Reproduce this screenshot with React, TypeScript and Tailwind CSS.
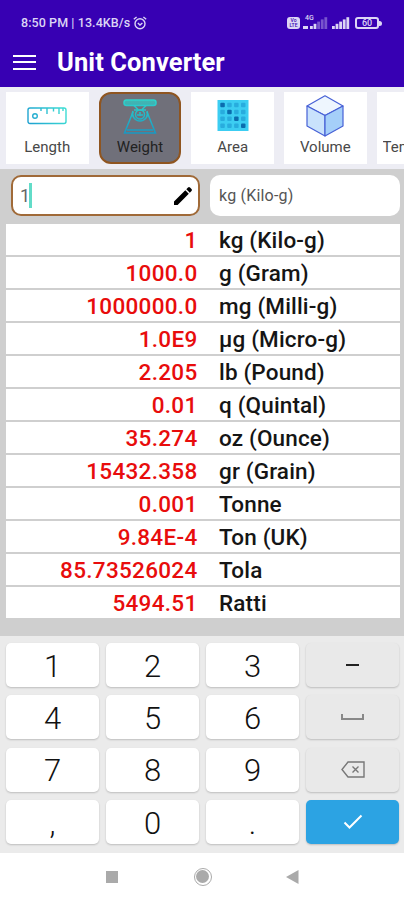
import { useState } from 'react'
import type { ReactNode } from 'react'

const rows = [
  { value: '1', unit: 'kg (Kilo-g)' },
  { value: '1000.0', unit: 'g (Gram)' },
  { value: '1000000.0', unit: 'mg (Milli-g)' },
  { value: '1.0E9', unit: 'µg (Micro-g)' },
  { value: '2.205', unit: 'lb (Pound)' },
  { value: '0.01', unit: 'q (Quintal)' },
  { value: '35.274', unit: 'oz (Ounce)' },
  { value: '15432.358', unit: 'gr (Grain)' },
  { value: '0.001', unit: 'Tonne' },
  { value: '9.84E-4', unit: 'Ton (UK)' },
  { value: '85.73526024', unit: 'Tola' },
  { value: '5494.51', unit: 'Ratti' },
]

const keys = ['1', '2', '3', 'minus', '4', '5', '6', 'space', '7', '8', '9', 'back', ',', '0', '.', 'done']

function LengthIcon() {
  return (
    <svg width="40" height="40" viewBox="0 0 40 40" fill="none" stroke="url(#ruler)" strokeWidth="1.4">
      <defs>
        <linearGradient id="ruler" gradientUnits="userSpaceOnUse" x1="0" y1="28" x2="40" y2="12">
          <stop offset="0" stopColor="#1c9ed0" />
          <stop offset="1" stopColor="#3fe0d4" />
        </linearGradient>
      </defs>
      <rect x="1" y="12" width="38" height="15.5" rx="2" />
      <circle cx="8" cy="20" r="2.3" />
      <path d="M14 12v3M20 12v6M26.5 12v3.5M32 12v6M36 12v3" />
    </svg>
  )
}

function WeightIcon() {
  return (
    <svg width="40" height="40" viewBox="0 0 40 40" fill="none" stroke="url(#scale)" strokeWidth="1.5">
      <defs>
        <linearGradient id="scale" gradientUnits="userSpaceOnUse" x1="0" y1="2" x2="0" y2="38">
          <stop offset="0" stopColor="#2fd8cc" />
          <stop offset="1" stopColor="#1698c4" />
        </linearGradient>
      </defs>
      <rect x="4" y="4" width="32" height="5.500" rx="2.500" fill="url(#scale)" fillOpacity=".7" />
      <path d="M14 9.500l4 4M26 9.500l-4 4M14 14h12M13 16L4.500 37h31L27 16M7 34h26" />
      <path d="M13 15c-2 5 2 10 7 10s9-5 7-10" />
      <circle cx="20" cy="18.500" r="4.500" />
      <path d="M17 19h6M20 16v4" />
    </svg>
  )
}

function AreaIcon() {
  const cells = [0, 1, 2, 3]
  return (
    <svg width="40" height="40" viewBox="0 0 40 40">
      <rect x="4.500" y="4" width="31" height="31" fill="#3ccdf2" />
      {cells.map((r) =>
        cells.map((c) => (
          <rect
            key={`${r}-${c}`}
            x={7.3 + c * 6.9}
            y={6.8 + r * 6.9}
            width="4.500"
            height="4.500"
            rx="1"
            fill={r === c ? '#0b6cae' : '#28acde'}
          />
        )),
      )}
    </svg>
  )
}

function VolumeIcon() {
  return (
    <svg width="42" height="42" viewBox="0 0 42 42" stroke="#4761d6" strokeWidth="1.200" strokeLinejoin="round">
      <path d="M21 .8L39 11L21 20.500L3 11z" fill="#eef6fe" />
      <path d="M3 11L21 20.500V41L3 31z" fill="#c9e2fc" />
      <path d="M39 11L21 20.500V41L39 31z" fill="#a5cff9" />
    </svg>
  )
}

function Tab({ label, icon, active, onClick }: { label: string; icon?: ReactNode; active: boolean; onClick: () => void }) {
  return (
    <button
      onClick={onClick}
      className={`flex h-[72px] w-[82.500px] shrink-0 flex-col items-center whitespace-nowrap text-[15px] leading-[20px] ${
        active ? 'rounded-[12px] border-2 border-[#8f5520] bg-[#70707a] text-[#222]' : 'border-2 border-white bg-white text-[#484848]'
      }`}
    >
      <span className="flex h-[43px] items-center justify-center">{icon}</span>
      <span className="max-w-[71px] truncate">{label}</span>
    </button>
  )
}

function Signal({ dim }: { dim?: boolean }) {
  return (
    <svg width="18" height="12" viewBox="0 0 18 12" fill="#dcd5f5">
      {[0, 1, 2, 3, 4].map((i) => (
        <rect key={i} x={i * 3.6} y={9 - i * 2.2} width="2.800" height={3 + i * 2.2} opacity={dim && i > 1 ? 0.4 : 1} />
      ))}
    </svg>
  )
}

function StatusBar() {
  return (
    <div className="flex h-[46px] items-center pl-[21px] pr-[22px] text-[12.500px] font-medium text-[#dcd5f5]">
      <span className="whitespace-nowrap tracking-[0.08px]">8:50 PM | 13.4KB/s</span>
      <svg className="ml-[2.500px]" width="14" height="14" viewBox="0 0 14 14" fill="none" stroke="currentColor" strokeWidth="1.400">
        <circle cx="7" cy="7.800" r="5" />
        <path d="M.8 3.200L3.600 1M13.200 3.200L10.400 1M4.800 7L7 9l2.400-2" />
      </svg>
      <div className="ml-auto flex items-center">
        <div className="flex h-3 w-[13px] flex-col items-center justify-center rounded-[3px] bg-[#dcd5f5] text-[5px] leading-[5px] text-[#3700b3]">
          <span>Vo</span>
          <span>LTE</span>
        </div>
        <div className="relative ml-[3px] mr-[4px] flex w-[25px] justify-end">
          <Signal dim />
          <span className="absolute -top-[2px] left-[2px] text-[7px] leading-[7px]">4G</span>
          <span className="absolute bottom-0 left-0 h-[3px] w-[5px] bg-[#dcd5f5]" />
        </div>
        <Signal />
        <div className="ml-[5px] flex h-3 w-6 items-center justify-center rounded-[3px] border-2 border-[#dcd5f5] text-[9px] leading-[8px]">60</div>
        <div className="h-[5px] w-[3px] rounded-r-sm bg-[#dcd5f5]" />
      </div>
    </div>
  )
}

function KeyFace({ name }: { name: string }) {
  if (name === 'minus') return <span className="h-[2px] w-[13px] bg-[#222]" />
  if (name === 'space') return <span className="h-[6px] w-[23px] border-2 border-t-0 border-[#888]" />
  if (name === 'back') {
    return (
      <svg width="24" height="18" viewBox="0 0 24 18" fill="none" stroke="#777" strokeWidth="1.400">
        <path d="M7 1h16v15H7L1 8.500zM11.500 5.500l6 6M17.500 5.500l-6 6" />
      </svg>
    )
  }
  if (name === 'done') {
    return (
      <svg width="20" height="16" viewBox="0 0 20 16" fill="none" stroke="#fff" strokeWidth="2">
        <path d="M1.500 8.500l5 5L18.500 1.500" />
      </svg>
    )
  }
  return <span className="relative top-[2px]">{name}</span>
}

function keyColor(name: string) {
  if (name === 'done') return 'bg-[#2ca3e3]'
  if (name === 'minus' || name === 'space' || name === 'back') return 'bg-[#e9e9e9]'
  return 'bg-white'
}

export default function App() {
  const [value, setValue] = useState('1')
  const [tab, setTab] = useState('Weight')

  function press(name: string) {
    if (name === 'back') setValue(value.slice(0, -1))
    else if (name === 'minus') setValue(value + '-')
    else if (name !== 'done' && name !== 'space') setValue(value + name)
  }

  const tabs = [
    { label: 'Length', icon: <LengthIcon /> },
    { label: 'Weight', icon: <WeightIcon /> },
    { label: 'Area', icon: <AreaIcon /> },
    { label: 'Volume', icon: <VolumeIcon /> },
    { label: 'Temperature' },
  ]

  return (
    <div className="flex h-[900px] w-[404px] flex-col overflow-hidden bg-white font-[Roboto,sans-serif]">
      <header className="h-[87px] shrink-0 bg-[#3700b3]">
        <StatusBar />
        <div className="flex h-[32px] items-center pl-[13px] text-white">
          <div className="flex w-[23px] flex-col gap-[4.500px]">
            <span className="h-[2px] bg-white" />
            <span className="h-[2px] bg-white" />
            <span className="h-[2px] bg-white" />
          </div>
          <h1 className="ml-[21px] text-[25.500px] font-bold tracking-[0.1px]">Unit Converter</h1>
        </div>
      </header>

      <nav className="flex h-[82px] shrink-0 gap-[10.200px] overflow-hidden bg-[#ededf4] pl-[6px] pt-[5px]">
        {tabs.map((t) => (
          <Tab key={t.label} label={t.label} icon={t.icon} active={tab === t.label} onClick={() => setTab(t.label)} />
        ))}
      </nav>

      <main className="h-[467px] shrink-0 bg-[#cfcfcf] pl-[6px] pr-[4px] pt-[6px]">
        <div className="flex h-[41px] gap-[10px] pl-[5px]">
          <div className="flex w-[189px] items-center rounded-[10px] border-2 border-[#a06a38] bg-white pl-[7px] pr-[5px] text-[18px] text-[#666]">
            {value}
            <span className="-ml-px h-[25px] w-[3px] bg-[#62dcc8]" />
            <svg className="ml-auto" width="20" height="20" viewBox="0 0 20 20">
              <path d="M1 15.500L12.300 4.300l3.500 3.500L4.600 19H1zM13.300 3.300l1.700-1.700q1-1 2 0l1.500 1.500q1 1 0 2l-1.700 1.700z" fill="#000" />
            </svg>
          </div>
          <div className="flex flex-1 items-center rounded-[10px] bg-white pl-[9px] pt-px text-[16px] tracking-[0.2px] text-[#555]">kg (Kilo-g)</div>
        </div>
        <div className="mt-[8px] flex flex-col gap-[2px]">
          {rows.map((r) => (
            <div key={r.unit} className="flex h-[31px] items-center bg-white pt-[2px] text-[22.500px] font-medium">
              <div className="w-[191.500px] text-right tracking-[0.3px] text-[#e80c0c]">{r.value}</div>
              <div className="ml-[21.500px] tracking-[0.15px] text-[#151515]">{r.unit}</div>
            </div>
          ))}
        </div>
      </main>

      <section className="grid h-[217px] shrink-0 auto-rows-[44px] grid-cols-4 gap-x-[7px] gap-y-[8.300px] bg-[#ebebeb] pl-[6px] pr-[5px] pt-[7px]">
        {keys.map((k) => (
          <button
            key={k}
            onClick={() => press(k)}
            className={`flex items-center justify-center rounded-[5px] text-[31px] font-light text-[#111] shadow-[0_1px_2px_rgba(0,0,0,0.2)] ${keyColor(k)}`}
          >
            <KeyFace name={k} />
          </button>
        ))}
      </section>

      <footer className="flex flex-1 items-center justify-center bg-white">
        <span className="h-3 w-3 bg-[#aaa]" />
        <span className="ml-[76px] flex h-[18px] w-[18px] items-center justify-center rounded-full border border-[#aaa]">
          <span className="h-[13px] w-[13px] rounded-full bg-[#aaa]" />
        </span>
        <svg className="ml-[74px]" width="13" height="14" viewBox="0 0 13 14">
          <path d="M0 7L12.500 0v14z" fill="#aaa" />
        </svg>
      </footer>
    </div>
  )
}
